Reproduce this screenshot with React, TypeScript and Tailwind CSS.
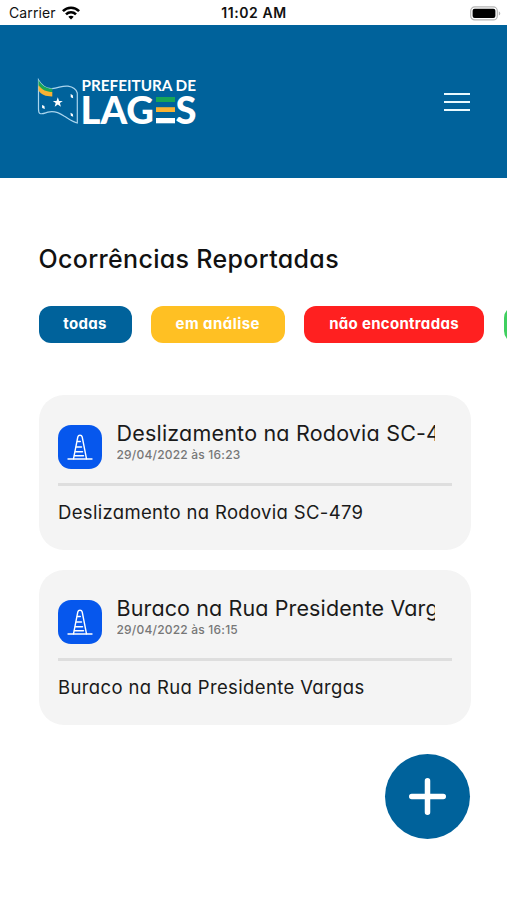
interface Occurrence {
  id: number;
  title: string;
  date: string;
  description: string;
  titleSpacing: string;
  descriptionSpacing: string;
}

const filters = [
  { label: 'todas', className: 'w-[93px] bg-[#00629b]', textClassName: 'tracking-[0.3px]' },
  { label: 'em análise', className: 'w-[133.5px] bg-[#ffc023]', textClassName: 'tracking-[0.45px]' },
  { label: 'não encontradas', className: 'w-[180px] bg-[#ff2020]', textClassName: 'tracking-[0.3px]' },
  { label: 'resolvidas', className: 'w-[134px] bg-[#3fcf5f]', textClassName: 'tracking-[0.3px]' },
];

const occurrences: Occurrence[] = [
  {
    id: 1,
    title: 'Deslizamento na Rodovia SC-479',
    date: '29/04/2022 às 16:23',
    description: 'Deslizamento na Rodovia SC-479',
    titleSpacing: 'tracking-[0.2px]',
    descriptionSpacing: 'tracking-[0.33px]',
  },
  {
    id: 2,
    title: 'Buraco na Rua Presidente Vargas',
    date: '29/04/2022 às 16:15',
    description: 'Buraco na Rua Presidente Vargas',
    titleSpacing: 'tracking-[0.12px]',
    descriptionSpacing: 'tracking-[0.36px]',
  },
];

const StatusBar = () => (
  <div className="grid h-[25px] shrink-0 grid-cols-3 items-center bg-white pl-[9px] pr-[6px] pt-px text-[#111] [font-feature-settings:normal]">
    <div className="flex items-center gap-[6px]">
      <span className="text-[14px] leading-none tracking-[0.1px]">Carrier</span>
      <svg className="h-[14px] w-[18px]" viewBox="0 0 18 14" fill="none" stroke="#000" strokeWidth="2.6">
        <path d="M0.9 5.2C5.4 0.6 12.6 0.6 17.1 5.2" />
        <path d="M4 8.4C6.8 5.6 11.2 5.6 14 8.4" />
        <path d="M9 13.6L6.3 10.8C7.8 9.4 10.2 9.4 11.7 10.8Z" fill="#000" stroke="none" />
      </svg>
    </div>
    <span className="whitespace-nowrap pr-[2px] text-center text-[14px] font-semibold leading-none tracking-[0.6px]">11:02 AM</span>
    <svg className="h-[15px] w-[31px] justify-self-end" viewBox="0 0 31 15">
      <rect x="0.7" y="0.9" width="26.6" height="13" rx="4" fill="#fff" stroke="#b5b5b5" strokeWidth="1.2" />
      <rect x="2.6" y="2.8" width="22.8" height="9.2" rx="2" fill="#000" />
      <path d="M28.8 5.2C30.8 6 30.8 8.8 28.8 9.6Z" fill="#b5b5b5" />
    </svg>
  </div>
);

const Logo = () => (
  <svg className="h-[68px] w-[170px]" viewBox="37 68 170 68" fill="none">
    {/* Flag */}
    <path
      d="M38.5 80C42 86 47 89 52 88.6C59 88 62 85.5 68 86.2C73 87 76.3 89.5 77.3 93V123C73 122 69 119 64 116C58 112 53 110.8 48 112.2C45 113 42.5 114.5 40 113.5C38.8 113 38.5 111 38.5 109Z"
      stroke="#a9d5ee"
      strokeWidth="1.2"
    />
    <path d="M38.5 80C42 86 47 88.8 52.3 88.5V92.3C46 92.5 41.5 90 38.5 86Z" fill="#18a558" />
    <path d="M38.5 85C42 90 47 92 52.3 92V96.4C46 96.5 41.5 95 38.5 90.5Z" fill="#f9b233" />
    <path d="M57.8 97.3L59.1 100.9H62.8L59.9 103.1L60.9 106.7L57.8 104.5L54.7 106.7L55.7 103.1L52.8 100.9H56.5Z" fill="#fff" />
    <path d="M70.6 94L72.8 95.2L73.2 98.2L70.8 97.2Z" fill="#fff" />
    <path d="M42 105L44.4 106L44.8 109L42.2 108Z" fill="#fff" />
    <path d="M70.5 112.8L72.8 114L73.2 116.8L70.8 115.8Z" fill="#fff" />
    <text x="81.5" y="91" textLength="114.5" lengthAdjust="spacingAndGlyphs" className="fill-white font-['Lato'] text-[15.5px] font-bold">
      PREFEITURA DE
    </text>
    <text x="80.5" y="123.5" textLength="73.5" lengthAdjust="spacingAndGlyphs" className="fill-white font-['Lato'] text-[37px] font-black">
      LAG
    </text>
    <path d="M156 97H175V102H156Z" fill="#18a558" />
    <path d="M156 107.2H175V112H156Z" fill="#f9b233" />
    <path d="M156 118H175V123.3H156Z" fill="#fff" />
    <text x="175.5" y="123.5" textLength="21" lengthAdjust="spacingAndGlyphs" className="fill-white font-['Lato'] text-[37px] font-black">
      S
    </text>
  </svg>
);

const ConeIcon = () => (
  <svg className="h-[27px] w-[26px]" viewBox="0 0 26 27" fill="none" stroke="#fff" strokeWidth="1.4" strokeLinecap="round" strokeLinejoin="round">
    <path d="M1 25H25" />
    <path d="M6.5 24.8L10.8 3Q11.2 1.3 13 1.3T15.2 3L19.5 24.8" />
    <path d="M10.5 7.5H13.3M9.5 13H14.5M8.5 17.7H15.5M7.5 21.8H16.5" />
  </svg>
);

const OccurrenceCard = ({ occurrence }: { occurrence: Occurrence }) => (
  <article className="h-[155px] rounded-[25px] bg-[#f4f4f4] pl-[19.5px] pr-[19px] pt-[24px]">
    <div className="flex">
      <div className="mt-[6px] flex size-[44px] shrink-0 items-center justify-center rounded-[13px] bg-[#0657ed]">
        <ConeIcon />
      </div>
      <div className="ml-[14.5px] w-[318.5px] overflow-hidden">
        <h2 className={`overflow-hidden whitespace-nowrap text-[21.5px] leading-[28px] text-[#1a1a1a] ${occurrence.titleSpacing}`}>
          {occurrence.title}
        </h2>
        <p className="pt-px text-[12px] font-medium leading-[14px] tracking-[0.2px] text-[#777] [font-feature-settings:normal]">
          {occurrence.date}
        </p>
      </div>
    </div>
    <hr className="mt-[13.5px] border-0 border-t-[3px] border-[#dedede]" />
    <p className={`mt-[12.5px] whitespace-nowrap text-[18.5px] leading-[28px] text-[#1a1a1a] ${occurrence.descriptionSpacing}`}>
      {occurrence.description}
    </p>
  </article>
);

export default function App() {
  return (
    <div className="flex h-[900px] w-[507px] flex-col overflow-hidden bg-white font-['Inter',sans-serif] [font-feature-settings:'cv11','ss03']">
      <StatusBar />

      {/* Header */}
      <header className="flex h-[153px] shrink-0 items-center justify-between bg-[#00629b] pl-[37px] pr-[37px]">
        <Logo />
        <button className="flex w-[26px] flex-col gap-[6px]" aria-label="Menu">
          <span className="h-[2px] w-full bg-[#e8faff]" />
          <span className="h-[2px] w-full bg-[#e8faff]" />
          <span className="h-[2px] w-full bg-[#e8faff]" />
        </button>
      </header>

      <main className="flex flex-1 flex-col pl-[38.5px]">
        <h1 className="mt-[63px] text-[25px] font-[450] leading-[36px] tracking-[0.33px] text-[#111]">Ocorrências Reportadas</h1>

        {/* Filters */}
        <div className="mt-[29px] flex gap-[19.5px] overflow-hidden">
          {filters.map((filter) => (
            <button key={filter.label} className={`h-[37px] shrink-0 rounded-[12px] text-[15px] font-bold text-white ${filter.className}`}>
              <span className={filter.textClassName}>{filter.label}</span>
            </button>
          ))}
        </div>

        {/* Occurrences */}
        <div className="mt-[52px] flex w-[432.5px] flex-col gap-5">
          {occurrences.map((occurrence) => (
            <OccurrenceCard key={occurrence.id} occurrence={occurrence} />
          ))}
        </div>

        <button className="mr-[37px] mt-[29px] flex size-[85px] items-center justify-center self-end rounded-full bg-[#00629b]" aria-label="Adicionar">
          <svg className="size-[37px]" viewBox="0 0 37 37" stroke="#fff" strokeWidth="5.5" strokeLinecap="round">
            <path d="M18.5 2.75V34.25M2.75 18.5H34.25" />
          </svg>
        </button>
      </main>
    </div>
  );
}
